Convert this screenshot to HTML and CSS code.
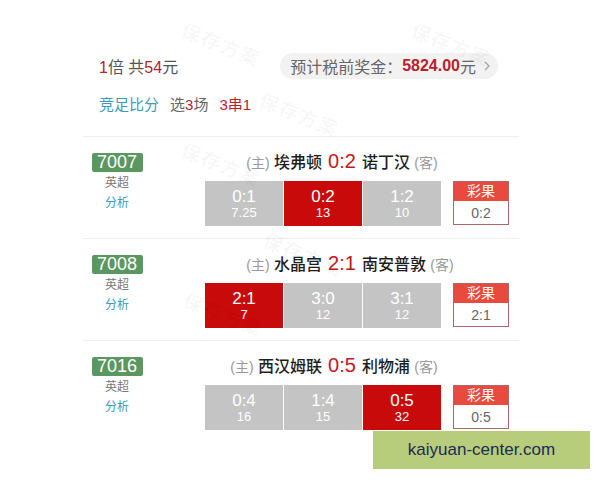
FILE: index.html
```html
<!DOCTYPE html>
<html lang="zh">
<head>
<meta charset="utf-8">
<title>方案</title>
<link rel="stylesheet" href="styles.css">
</head>
<body>
<div class="page">
  <div class="head">
    <div class="line1">
      <div class="mult"><span class="red">1</span>倍 共<span class="red">54</span>元</div>
      <div class="pill">预计税前奖金：<span class="prize">5824.00</span>元<svg class="chev" width="6" height="10" viewBox="0 0 6 10"><path d="M1 1 L5 5 L1 9" fill="none" stroke="#a0a0a0" stroke-width="1.2"/></svg></div>
    </div>
    <div class="line2"><span class="type">竞足比分</span><span>选<span class="red">3</span>场</span><span class="red">3串1</span></div>
  </div>

  <div class="match">
    <div class="side"><div class="no">7007</div><div class="lg">英超</div><div class="ana">分析</div></div>
    <div class="main">
      <div class="title"><div class="home"><span class="tag">(主)</span> 埃弗顿</div><div class="score">0:2</div><div class="away">诺丁汉 <span class="tag">(客)</span></div></div>
      <div class="bet">
        <div class="cells">
          <div class="cell"><span class="cs">0:1</span><span class="co">7.25</span></div>
          <div class="cell hit"><span class="cs">0:2</span><span class="co">13</span></div>
          <div class="cell"><span class="cs">1:2</span><span class="co">10</span></div>
        </div>
        <div class="res"><div class="rh">彩果</div><div class="rv">0:2</div></div>
      </div>
    </div>
  </div>

  <div class="match">
    <div class="side"><div class="no">7008</div><div class="lg">英超</div><div class="ana">分析</div></div>
    <div class="main">
      <div class="title"><div class="home"><span class="tag">(主)</span> 水晶宫</div><div class="score">2:1</div><div class="away">南安普敦 <span class="tag">(客)</span></div></div>
      <div class="bet">
        <div class="cells">
          <div class="cell hit"><span class="cs">2:1</span><span class="co">7</span></div>
          <div class="cell"><span class="cs">3:0</span><span class="co">12</span></div>
          <div class="cell"><span class="cs">3:1</span><span class="co">12</span></div>
        </div>
        <div class="res"><div class="rh">彩果</div><div class="rv">2:1</div></div>
      </div>
    </div>
  </div>

  <div class="match">
    <div class="side"><div class="no">7016</div><div class="lg">英超</div><div class="ana">分析</div></div>
    <div class="main">
      <div class="title"><div class="home"><span class="tag">(主)</span> 西汉姆联</div><div class="score">0:5</div><div class="away">利物浦 <span class="tag">(客)</span></div></div>
      <div class="bet">
        <div class="cells">
          <div class="cell"><span class="cs">0:4</span><span class="co">16</span></div>
          <div class="cell"><span class="cs">1:4</span><span class="co">15</span></div>
          <div class="cell hit"><span class="cs">0:5</span><span class="co">32</span></div>
        </div>
        <div class="res"><div class="rh">彩果</div><div class="rv">0:5</div></div>
      </div>
    </div>
  </div>
</div>

<span class="wm wm1">保存方案</span>
<span class="wm wm2">保存方案</span>
<span class="wm wm3">保存方案</span>
<span class="wm wm4">保存方案</span>
<span class="wm wm5">保存方案</span>
<span class="wm wm6">保存方案</span>

<div class="site">kaiyuan-center.com</div>
</body>
</html>
```
FILE: styles.css
```css
body {
  margin: 0;
  width: 600px;
  height: 480px;
  overflow: hidden;
  position: relative;
  background: #fff;
  font-family: "Liberation Sans", "Noto Sans CJK SC", sans-serif;
}

.page {
  margin-left: 83px;
  width: 436px;
  padding-top: 53px;
}

.head {
  padding: 0 21px 23px 16px;
}

.line1 {
  display: flex;
  justify-content: space-between;
  align-items: center;
  height: 26px;
}

.mult {
  font-size: 16px;
  color: #555;
}

.red {
  color: #b7222d;
}

.pill {
  height: 26px;
  border-radius: 13px;
  background: #f2f2f2;
  padding: 0 8px 0 10px;
  display: flex;
  align-items: center;
  font-size: 16px;
  color: #666;
}

.prize {
  color: #b7222d;
  font-weight: bold;
}

.chev {
  margin-left: 8px;
}

.line2 {
  margin-top: 14px;
  height: 20px;
  display: flex;
  align-items: center;
  gap: 11px;
  font-size: 15px;
  color: #666;
}

.type {
  color: #3c9ac0;
}

.match {
  border-top: 1px solid #eeeeee;
  display: grid;
  grid-template-columns: 68px 1fr;
  column-gap: 54px;
  padding: 12px 0;
}

.side {
  display: flex;
  flex-direction: column;
  align-items: center;
  padding-top: 4px;
}

.no {
  background: #5b9760;
  color: #fff;
  font-size: 18px;
  width: 51px;
  height: 19px;
  line-height: 19px;
  text-align: center;
  border-radius: 2px;
}

.lg {
  font-size: 12px;
  color: #777;
  line-height: 20px;
  margin-top: 1px;
}

.ana {
  font-size: 12px;
  color: #3c9ac0;
  line-height: 20px;
}

.title {
  width: 274px;
  height: 24px;
  display: grid;
  grid-template-columns: 1fr auto 1fr;
  column-gap: 6px;
  align-items: center;
}

.home,
.away {
  font-size: 16px;
  font-weight: 500;
  color: #1e1e1e;
  white-space: nowrap;
}

.home {
  text-align: right;
}

.tag {
  font-size: 14px;
  font-weight: normal;
  color: #999;
}

.score {
  font-size: 20px;
  color: #c4161c;
}

.bet {
  display: flex;
  margin-top: 8px;
}

.cells {
  display: grid;
  grid-template-columns: repeat(3, 78px);
  gap: 1px;
  height: 45px;
}

.cell {
  background: #c4c4c4;
  color: #fff;
  display: flex;
  flex-direction: column;
  align-items: center;
  justify-content: center;
}

.cell.hit {
  background: #c90a0a;
}

.cs {
  font-size: 17px;
  line-height: 18px;
}

.co {
  font-size: 13px;
  line-height: 14px;
}

.res {
  margin-left: 12px;
  width: 56px;
  height: 44px;
  border: 1px solid #a8686c;
  box-sizing: border-box;
  display: flex;
  flex-direction: column;
}

.rh {
  background: #e84a3e;
  color: #fff;
  font-size: 14px;
  height: 19px;
  line-height: 19px;
  text-align: center;
}

.rv {
  flex: 1;
  display: flex;
  align-items: center;
  justify-content: center;
  font-size: 14px;
  color: #666;
  background: #fff;
}

.wm {
  position: absolute;
  font-size: 19px;
  font-weight: bold;
  letter-spacing: 2px;
  color: rgba(0, 0, 0, 0.04);
  transform: rotate(22deg);
  pointer-events: none;
  white-space: nowrap;
}

.wm1 { left: 180px; top: 30px; }
.wm2 { left: 410px; top: 30px; }
.wm3 { left: 258px; top: 100px; }
.wm4 { left: 180px; top: 150px; }
.wm5 { left: 262px; top: 240px; }
.wm6 { left: 182px; top: 300px; }

.site {
  position: absolute;
  left: 373px;
  top: 431px;
  width: 217px;
  height: 38px;
  line-height: 38px;
  text-align: center;
  background: #b7cd7b;
  color: #1e2a57;
  font-size: 17px;
}
```
